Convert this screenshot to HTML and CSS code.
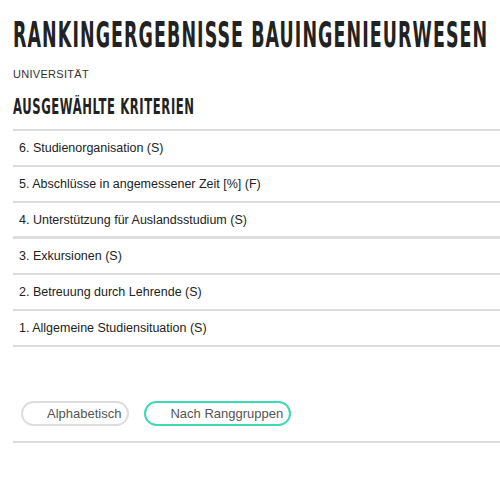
FILE: index.html
```html
<!DOCTYPE html>
<html lang="de">
<head>
    <meta charset="UTF-8">
    <meta name="viewport" content="width=device-width, initial-scale=1.0">
    <title>Rankingergebnisse Bauingenieurwesen</title>
    <link rel="stylesheet" href="styles.css">
</head>
<body>

    <div class="ranking">
        <!-- Kopf -->
        <h1 class="titel"><span>Rankingergebnisse Bauingenieurwesen</span></h1>
        <div class="hochschule">Universität</div>
        <h2 class="untertitel"><span>Ausgewählte Kriterien</span></h2>

        <!-- Kriterienliste -->
        <ul class="kriterien">
            <li>6. Studienorganisation (S)</li>
            <li>5. Abschlüsse in angemessener Zeit [%] (F)</li>
            <li class="gruppe">4. Unterstützung für Auslandsstudium (S)</li>
            <li>3. Exkursionen (S)</li>
            <li>2. Betreuung durch Lehrende (S)</li>
            <li>1. Allgemeine Studiensituation (S)</li>
        </ul>

        <!-- Sortierung -->
        <div class="sortierung">
            <button type="button" class="sort-btn">Alphabetisch</button>
            <button type="button" class="sort-btn active">Nach Ranggruppen</button>
        </div>
    </div>

</body>
</html>
```

FILE: styles.css
```css
body {
    margin: 0;
    background-color: #fff;
    font-family: "Liberation Sans", Arial, sans-serif;
    color: #2b2b2b;
    overflow: hidden;
}

.ranking {
    padding: 0 0 0 13px;
}

/* Überschriften in schmaler Schrift */
.titel, .untertitel {
    margin: 0;
    font-family: "DejaVu Sans Condensed", "DejaVu Sans", sans-serif;
    font-weight: bold;
    text-transform: uppercase;
    color: #222;
    white-space: nowrap;
    overflow: hidden;
}

.titel span, .untertitel span {
    display: inline-block;
    transform-origin: 0 0;
}

.titel {
    font-size: 36px;
    line-height: 42px;
    padding-top: 14px;
    letter-spacing: 2px;
}

.titel span {
    transform: scaleX(0.539);
}

.hochschule {
    margin-top: 12px;
    font-size: 11px;
    text-transform: uppercase;
    color: #333;
    letter-spacing: 0.3px;
}

.untertitel {
    font-size: 21px;
    line-height: 24px;
    margin-top: 15px;
    letter-spacing: 1px;
}

.untertitel span {
    transform: scaleX(0.614);
}

/* Liste */
.kriterien {
    list-style: none;
    margin: 10px 0 0;
    padding: 0;
    border-top: 2px solid #ddd;
}

.kriterien li {
    height: 34px;
    line-height: 34px;
    padding-left: 6px;
    font-size: 12.5px;
    color: #222;
    border-bottom: 2px solid #ddd;
}

.kriterien li.gruppe {
    height: 33px;
    border-bottom-width: 3px;
}

/* Buttons */
.sortierung {
    display: flex;
    gap: 15px;
    margin-top: 54px;
    padding: 0 0 15px 8px;
    border-bottom: 2px solid #ddd;
}

.sort-btn {
    background-color: #fff;
    border: 2px solid #ddd;
    border-radius: 13px;
    height: 25px;
    padding: 0 6px 0 24px;
    font-family: "Liberation Sans", Arial, sans-serif;
    font-size: 13px;
    color: #555;
    cursor: pointer;
}

.sort-btn.active {
    border-color: #3ed8b2;
}
```
